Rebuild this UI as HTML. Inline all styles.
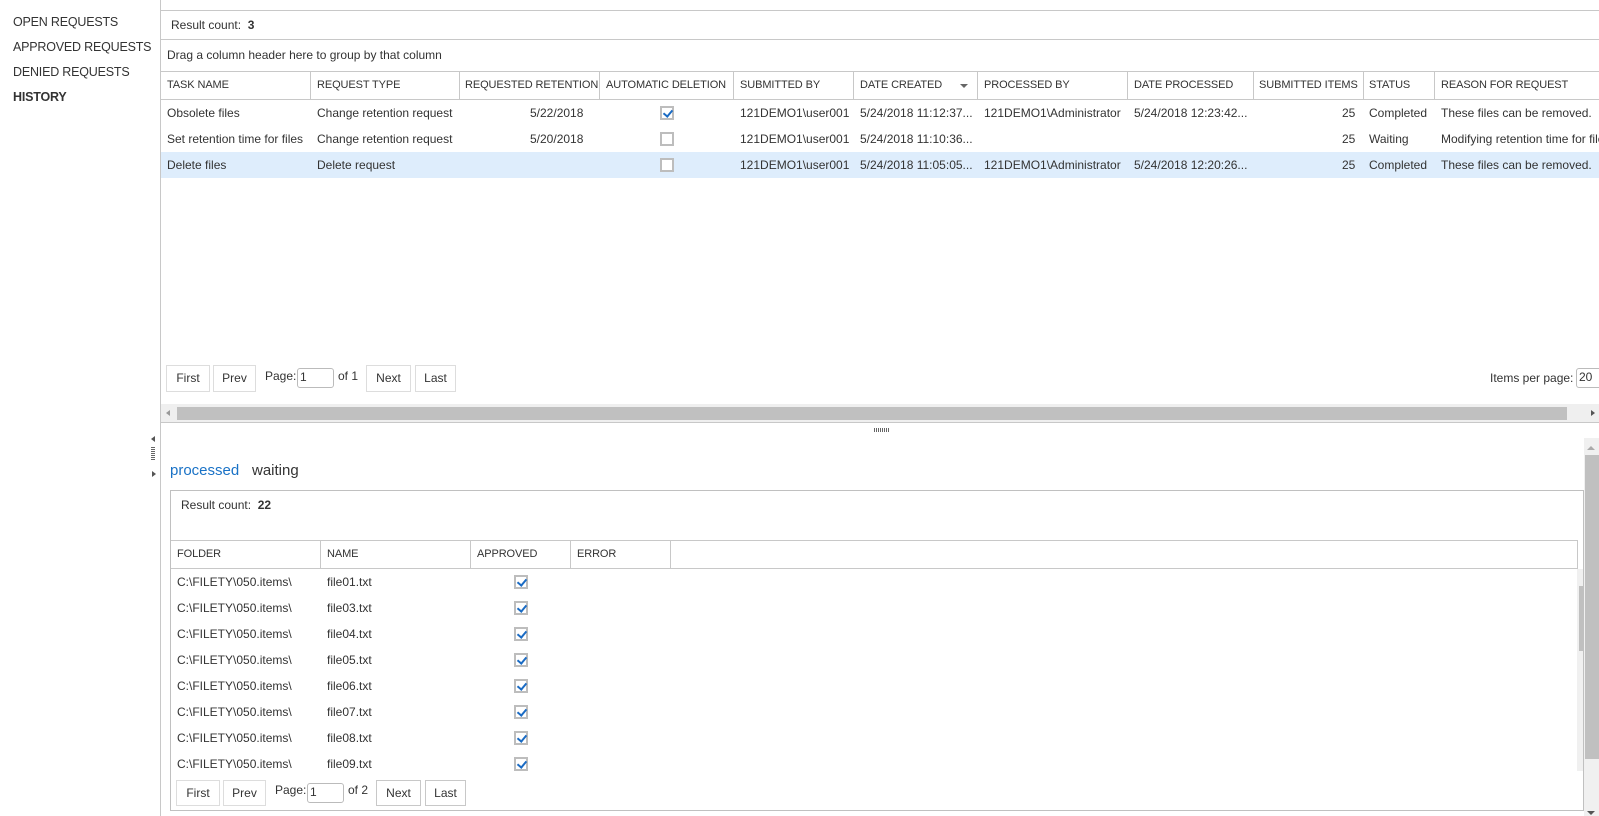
<!DOCTYPE html>
<html><head><meta charset="utf-8"><style>
*{box-sizing:border-box;margin:0;padding:0}
body{width:1599px;height:816px;position:relative;overflow:hidden;background:#fff;font-family:"Liberation Sans",sans-serif;font-size:12px;color:#333}
.a{position:absolute;white-space:nowrap;line-height:14px}
.h{font-size:11px;letter-spacing:-0.1px}
.hl{position:absolute;height:1px;background:#c8c8c8}
.vl{position:absolute;width:1px;background:#c8c8c8}
.cb{position:absolute;width:14px;height:14px;border:2px solid #bdbdbd;background:#fff}
.cb.c::after{content:"";position:absolute;left:3px;top:0px;width:4px;height:7px;border:solid #1a6bc4;border-width:0 2px 2px 0;transform:rotate(40deg)}
.btn{position:absolute;border:1px solid #ddd;background:#fff;text-align:center;font-size:12px}
.inp{position:absolute;border:1px solid #bbb;border-radius:3px;background:#fff;padding-left:2px;font-size:12px;line-height:16px}
.sb{position:absolute;font-size:12.5px;color:#333;letter-spacing:-0.2px}
</style></head><body>
<div class="sb" style="left:13px;top:15px">OPEN REQUESTS</div>
<div class="sb" style="left:13px;top:40px">APPROVED REQUESTS</div>
<div class="sb" style="left:13px;top:65px">DENIED REQUESTS</div>
<div class="sb" style="left:13px;top:90px;font-weight:bold">HISTORY</div>
<div class="vl" style="left:160px;top:0;height:816px"></div>

<div class="hl" style="left:160px;top:10px;width:1439px"></div>
<div class="a" style="left:171px;top:18px">Result count:&nbsp; <b>3</b></div>
<div class="hl" style="left:160px;top:39px;width:1439px"></div>
<div class="a" style="left:167px;top:48px">Drag a column header here to group by that column</div>
<div class="hl" style="left:160px;top:71px;width:1439px"></div>
<div class="hl" style="left:160px;top:99px;width:1439px"></div>
<div class="vl" style="left:310px;top:71px;height:28px"></div>
<div class="vl" style="left:459px;top:71px;height:28px"></div>
<div class="vl" style="left:599px;top:71px;height:28px"></div>
<div class="vl" style="left:733px;top:71px;height:28px"></div>
<div class="vl" style="left:853px;top:71px;height:28px"></div>
<div class="vl" style="left:977px;top:71px;height:28px"></div>
<div class="vl" style="left:1127px;top:71px;height:28px"></div>
<div class="vl" style="left:1253px;top:71px;height:28px"></div>
<div class="vl" style="left:1363px;top:71px;height:28px"></div>
<div class="vl" style="left:1434px;top:71px;height:28px"></div>
<div class="a h" style="left:167px;top:78px">TASK NAME</div>
<div class="a h" style="left:317px;top:78px">REQUEST TYPE</div>
<div class="a h" style="left:465px;top:78px">REQUESTED RETENTION</div>
<div class="a h" style="left:606px;top:78px">AUTOMATIC DELETION</div>
<div class="a h" style="left:740px;top:78px">SUBMITTED BY</div>
<div class="a h" style="left:860px;top:78px">DATE CREATED</div>
<div style="position:absolute;left:960px;top:84px;border:4px solid transparent;border-top:4px solid #666"></div>
<div class="a h" style="left:984px;top:78px">PROCESSED BY</div>
<div class="a h" style="left:1134px;top:78px">DATE PROCESSED</div>
<div class="a h" style="left:1259px;top:78px">SUBMITTED ITEMS</div>
<div class="a h" style="left:1369px;top:78px">STATUS</div>
<div class="a h" style="left:1441px;top:78px">REASON FOR REQUEST</div>

<div style="position:absolute;left:161px;top:152px;width:1438px;height:26px;background:#deedfc"></div>
<div class="a" style="left:167px;top:106px">Obsolete files</div>
<div class="a" style="left:317px;top:106px">Change retention request</div>
<div class="a" style="left:530px;top:106px">5/22/2018</div>
<div class="cb c" style="left:660px;top:106px"></div>
<div class="a" style="left:740px;top:106px">121DEMO1\user001</div>
<div class="a" style="left:860px;top:106px">5/24/2018 11:12:37...</div>
<div class="a" style="left:984px;top:106px">121DEMO1\Administrator</div>
<div class="a" style="left:1134px;top:106px">5/24/2018 12:23:42...</div>
<div class="a" style="left:1342px;top:106px">25</div>
<div class="a" style="left:1369px;top:106px">Completed</div>
<div class="a" style="left:1441px;top:106px">These files can be removed.</div>

<div class="a" style="left:167px;top:132px">Set retention time for files</div>
<div class="a" style="left:317px;top:132px">Change retention request</div>
<div class="a" style="left:530px;top:132px">5/20/2018</div>
<div class="cb" style="left:660px;top:132px"></div>
<div class="a" style="left:740px;top:132px">121DEMO1\user001</div>
<div class="a" style="left:860px;top:132px">5/24/2018 11:10:36...</div>
<div class="a" style="left:1342px;top:132px">25</div>
<div class="a" style="left:1369px;top:132px">Waiting</div>
<div class="a" style="left:1441px;top:132px">Modifying retention time for files</div>

<div class="a" style="left:167px;top:158px">Delete files</div>
<div class="a" style="left:317px;top:158px">Delete request</div>
<div class="cb" style="left:660px;top:158px"></div>
<div class="a" style="left:740px;top:158px">121DEMO1\user001</div>
<div class="a" style="left:860px;top:158px">5/24/2018 11:05:05...</div>
<div class="a" style="left:984px;top:158px">121DEMO1\Administrator</div>
<div class="a" style="left:1134px;top:158px">5/24/2018 12:20:26...</div>
<div class="a" style="left:1342px;top:158px">25</div>
<div class="a" style="left:1369px;top:158px">Completed</div>
<div class="a" style="left:1441px;top:158px">These files can be removed.</div>

<div class="btn" style="left:166px;top:365px;width:44px;height:27px;line-height:25px">First</div>
<div class="btn" style="left:213px;top:365px;width:43px;height:27px;line-height:25px">Prev</div>
<div class="a" style="left:265px;top:369px">Page:</div>
<div class="inp" style="left:297px;top:368px;width:37px;height:20px">1</div>
<div class="a" style="left:338px;top:369px">of 1</div>
<div class="btn" style="left:366px;top:365px;width:45px;height:27px;line-height:25px">Next</div>
<div class="btn" style="left:415px;top:365px;width:41px;height:27px;line-height:25px">Last</div>
<div class="a" style="left:1490px;top:371px">Items per page:</div>
<div class="inp" style="left:1576px;top:368px;width:30px;height:20px">20</div>

<div style="position:absolute;left:161px;top:404px;width:1438px;height:18px;background:#efefef"></div>
<div style="position:absolute;left:177px;top:407px;width:1390px;height:13px;background:#c0c0c0"></div>
<div style="position:absolute;left:166px;top:410px;border:3.5px solid transparent;border-right:4px solid #999;border-left:0"></div>
<div style="position:absolute;left:1591px;top:410px;border:3.5px solid transparent;border-left:4px solid #555;border-right:0"></div>
<div class="hl" style="left:160px;top:422px;width:1439px"></div>
<div style="position:absolute;left:874px;top:428px;width:15px;height:4px;background:repeating-linear-gradient(90deg,#666 0 1px,transparent 1px 2px)"></div>

<div style="position:absolute;left:151px;top:436px;border:3.5px solid transparent;border-right:4px solid #555;border-left:0"></div>
<div style="position:absolute;left:151px;top:447px;width:4px;height:13px;background:repeating-linear-gradient(180deg,#666 0 1px,transparent 1px 2px)"></div>
<div style="position:absolute;left:152px;top:471px;border:3.5px solid transparent;border-left:4px solid #555;border-right:0"></div>

<div class="a" style="left:170px;top:462px;font-size:15px;line-height:18px;color:#1a72c6">processed</div>
<div class="a" style="left:252px;top:462px;font-size:15px;line-height:18px;color:#333">waiting</div>

<div style="position:absolute;left:170px;top:490px;width:1414px;height:321px;border:1px solid #c0c0c0"></div>
<div class="a" style="left:181px;top:498px">Result count:&nbsp; <b>22</b></div>
<div class="hl" style="left:171px;top:540px;width:1406px"></div>
<div class="vl" style="left:1577px;top:540px;height:29px"></div>
<div class="hl" style="left:171px;top:568px;width:1406px"></div>
<div class="vl" style="left:320px;top:540px;height:28px"></div>
<div class="vl" style="left:470px;top:540px;height:28px"></div>
<div class="vl" style="left:570px;top:540px;height:28px"></div>
<div class="vl" style="left:670px;top:540px;height:28px"></div>
<div class="a h" style="left:177px;top:547px">FOLDER</div>
<div class="a h" style="left:327px;top:547px">NAME</div>
<div class="a h" style="left:477px;top:547px">APPROVED</div>
<div class="a h" style="left:577px;top:547px">ERROR</div>

<div class="a" style="left:177px;top:575px">C:\FILETY\050.items\</div><div class="a" style="left:327px;top:575px">file01.txt</div><div class="cb c" style="left:514px;top:575px"></div>
<div class="a" style="left:177px;top:601px">C:\FILETY\050.items\</div><div class="a" style="left:327px;top:601px">file03.txt</div><div class="cb c" style="left:514px;top:601px"></div>
<div class="a" style="left:177px;top:627px">C:\FILETY\050.items\</div><div class="a" style="left:327px;top:627px">file04.txt</div><div class="cb c" style="left:514px;top:627px"></div>
<div class="a" style="left:177px;top:653px">C:\FILETY\050.items\</div><div class="a" style="left:327px;top:653px">file05.txt</div><div class="cb c" style="left:514px;top:653px"></div>
<div class="a" style="left:177px;top:679px">C:\FILETY\050.items\</div><div class="a" style="left:327px;top:679px">file06.txt</div><div class="cb c" style="left:514px;top:679px"></div>
<div class="a" style="left:177px;top:705px">C:\FILETY\050.items\</div><div class="a" style="left:327px;top:705px">file07.txt</div><div class="cb c" style="left:514px;top:705px"></div>
<div class="a" style="left:177px;top:731px">C:\FILETY\050.items\</div><div class="a" style="left:327px;top:731px">file08.txt</div><div class="cb c" style="left:514px;top:731px"></div>
<div class="a" style="left:177px;top:757px">C:\FILETY\050.items\</div><div class="a" style="left:327px;top:757px">file09.txt</div><div class="cb c" style="left:514px;top:757px"></div>

<div style="position:absolute;left:1577px;top:569px;width:6px;height:202px;background:#f0f0f0"></div>
<div style="position:absolute;left:1579px;top:586px;width:4px;height:65px;background:#c0c0c0"></div>

<div class="btn" style="left:176px;top:780px;width:44px;height:26px;line-height:24px">First</div>
<div class="btn" style="left:223px;top:780px;width:43px;height:26px;line-height:24px">Prev</div>
<div class="a" style="left:275px;top:783px">Page:</div>
<div class="inp" style="left:307px;top:783px;width:37px;height:20px">1</div>
<div class="a" style="left:348px;top:783px">of 2</div>
<div class="btn" style="left:376px;top:780px;width:45px;height:26px;line-height:24px;border-color:#c8c8c8">Next</div>
<div class="btn" style="left:425px;top:780px;width:41px;height:26px;line-height:24px;border-color:#c8c8c8">Last</div>

<div style="position:absolute;left:1584px;top:438px;width:15px;height:378px;background:#f0f0f0"></div>
<div style="position:absolute;left:1587px;top:446px;border:4px solid transparent;border-bottom:4px solid #aaa;border-top:0"></div>
<div style="position:absolute;left:1585px;top:455px;width:14px;height:304px;background:#c0c0c0"></div>
<div style="position:absolute;left:1587px;top:811px;border:4px solid transparent;border-top:4px solid #555;border-bottom:0"></div>
</body></html>
